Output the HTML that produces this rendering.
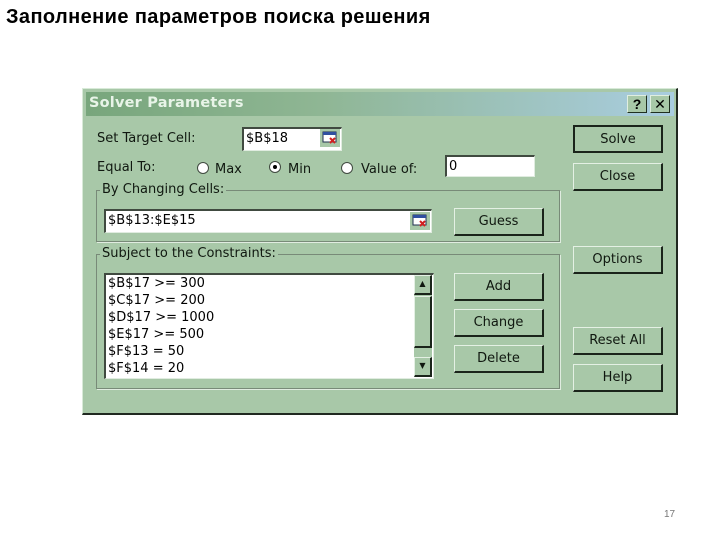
<!DOCTYPE html>
<html><head><meta charset="utf-8"><style>
*{margin:0;padding:0;box-sizing:border-box}
body{width:720px;height:540px;background:#fff;position:relative;overflow:hidden;font-family:"Liberation Sans","DejaVu Sans",sans-serif}
.a{position:absolute}
h1{position:absolute;left:6px;top:6px;font-size:20px;font-weight:bold;color:#000;font-family:"Liberation Sans",sans-serif;letter-spacing:0.4px;white-space:nowrap}
#dlg{left:82px;top:88px;width:596px;height:327px;background:#a8c8a8;border:1px solid #d8ead8;border-right:2px solid #202820;border-bottom:2px solid #202820}
#tb{left:86px;top:92px;width:588px;height:24px;background:linear-gradient(90deg,#78a67c 0%,#8fb694 40%,#a9cde0 100%);}
#tb span{position:absolute;left:3px;top:3px;color:#e8f4e8;font-weight:bold;font-size:14.5px;font-family:"DejaVu Sans",sans-serif;letter-spacing:0.2px}
.tbtn{width:20px;height:18px;top:95px;background:#a8c8a8;border:1px solid #e0eee0;border-right:1px solid #203020;border-bottom:1px solid #203020;font-size:14px;font-weight:bold;text-align:center;line-height:16px;color:#000}
.t{font-size:13px;color:#101810;font-family:"DejaVu Sans",sans-serif;white-space:nowrap}
.btn{background:#a8c8a8;border:1px solid #e4f0e4;border-right:2px solid #1a241a;border-bottom:2px solid #1a241a;text-align:center;font-size:13px;font-family:"DejaVu Sans",sans-serif;line-height:25px;color:#101810;width:90px;height:28px}
.in{background:#fff;border:2px solid #404a40;border-right:1px solid #e0ece0;border-bottom:1px solid #e0ece0;font-size:13px;font-family:"DejaVu Sans",sans-serif;padding-left:2px;line-height:19px}
.grp{border:1px solid #788a78;box-shadow:1px 1px 0 #e0ece0}
.rad{width:12px;height:12px;border-radius:50%;background:#fff;border:1px solid #404a40}
.ico{width:20px;height:18px;background:#a8c8a8}
</style></head><body>
<h1>Заполнение параметров поиска решения</h1>
<div class="a" id="dlg"></div>
<div class="a" id="tb"><span>Solver Parameters</span></div>
<div class="a tbtn" style="left:627px">?</div>
<div class="a tbtn" style="left:650px">✕</div>

<div class="a t" style="left:97px;top:131px">Set Target Cell:</div>
<div class="a in" style="left:242px;top:127px;width:100px;height:24px">$B$18</div>
<div class="a ico" style="left:320px;top:129px"><svg width="20" height="18"><rect x="3" y="3" width="13" height="10" fill="#fff" stroke="#203050"/><rect x="3" y="3" width="13" height="3" fill="#3050a0"/><path d="M10 9l5 5M15 9l-5 5" stroke="#d02020" stroke-width="2"/></svg></div>

<div class="a t" style="left:97px;top:160px">Equal To:</div>
<div class="a rad" style="left:197px;top:162px"></div><div class="a t" style="left:215px;top:162px">Max</div>
<div class="a rad" style="left:269px;top:161px"><div style="width:4px;height:4px;background:#000;border-radius:50%;margin:3px"></div></div><div class="a t" style="left:288px;top:162px">Min</div>
<div class="a rad" style="left:341px;top:162px"></div><div class="a t" style="left:361px;top:162px">Value of:</div>
<div class="a in" style="left:445px;top:155px;width:90px;height:22px">0</div>

<div class="a grp" style="left:96px;top:190px;width:464px;height:52px"></div>
<div class="a t" style="left:100px;top:182px;background:#a8c8a8;padding:0 2px">By Changing Cells:</div>
<div class="a in" style="left:104px;top:209px;width:328px;height:24px">$B$13:$E$15</div>
<div class="a ico" style="left:410px;top:212px"><svg width="20" height="18"><rect x="3" y="3" width="13" height="10" fill="#fff" stroke="#203050"/><rect x="3" y="3" width="13" height="3" fill="#3050a0"/><path d="M10 9l5 5M15 9l-5 5" stroke="#d02020" stroke-width="2"/></svg></div>
<div class="a btn" style="left:454px;top:208px">Guess</div>

<div class="a grp" style="left:96px;top:254px;width:464px;height:135px"></div>
<div class="a t" style="left:100px;top:246px;background:#a8c8a8;padding:0 2px">Subject to the Constraints:</div>
<div class="a in" style="left:104px;top:273px;width:330px;height:106px;line-height:17px;padding-top:0">$B$17 &gt;= 300<br>$C$17 &gt;= 200<br>$D$17 &gt;= 1000<br>$E$17 &gt;= 500<br>$F$13 = 50<br>$F$14 = 20</div>
<div class="a" style="left:414px;top:275px;width:18px;height:102px;background:#a8c8a8"></div>
<div class="a btn" style="left:414px;top:275px;width:18px;height:20px;line-height:16px;font-size:8px">▲</div>
<div class="a btn" style="left:414px;top:296px;width:18px;height:52px"></div>
<div class="a btn" style="left:414px;top:357px;width:18px;height:20px;line-height:16px;font-size:8px">▼</div>

<div class="a btn" style="left:454px;top:273px">Add</div>
<div class="a btn" style="left:454px;top:309px">Change</div>
<div class="a btn" style="left:454px;top:345px">Delete</div>

<div class="a btn" style="left:573px;top:125px;border:2px solid #1a241a">Solve</div>
<div class="a btn" style="left:573px;top:163px">Close</div>
<div class="a btn" style="left:573px;top:246px">Options</div>
<div class="a btn" style="left:573px;top:327px">Reset All</div>
<div class="a btn" style="left:573px;top:364px">Help</div>

<div class="a" style="left:664px;top:509px;font-size:10px;color:#777">17</div>
</body></html>
